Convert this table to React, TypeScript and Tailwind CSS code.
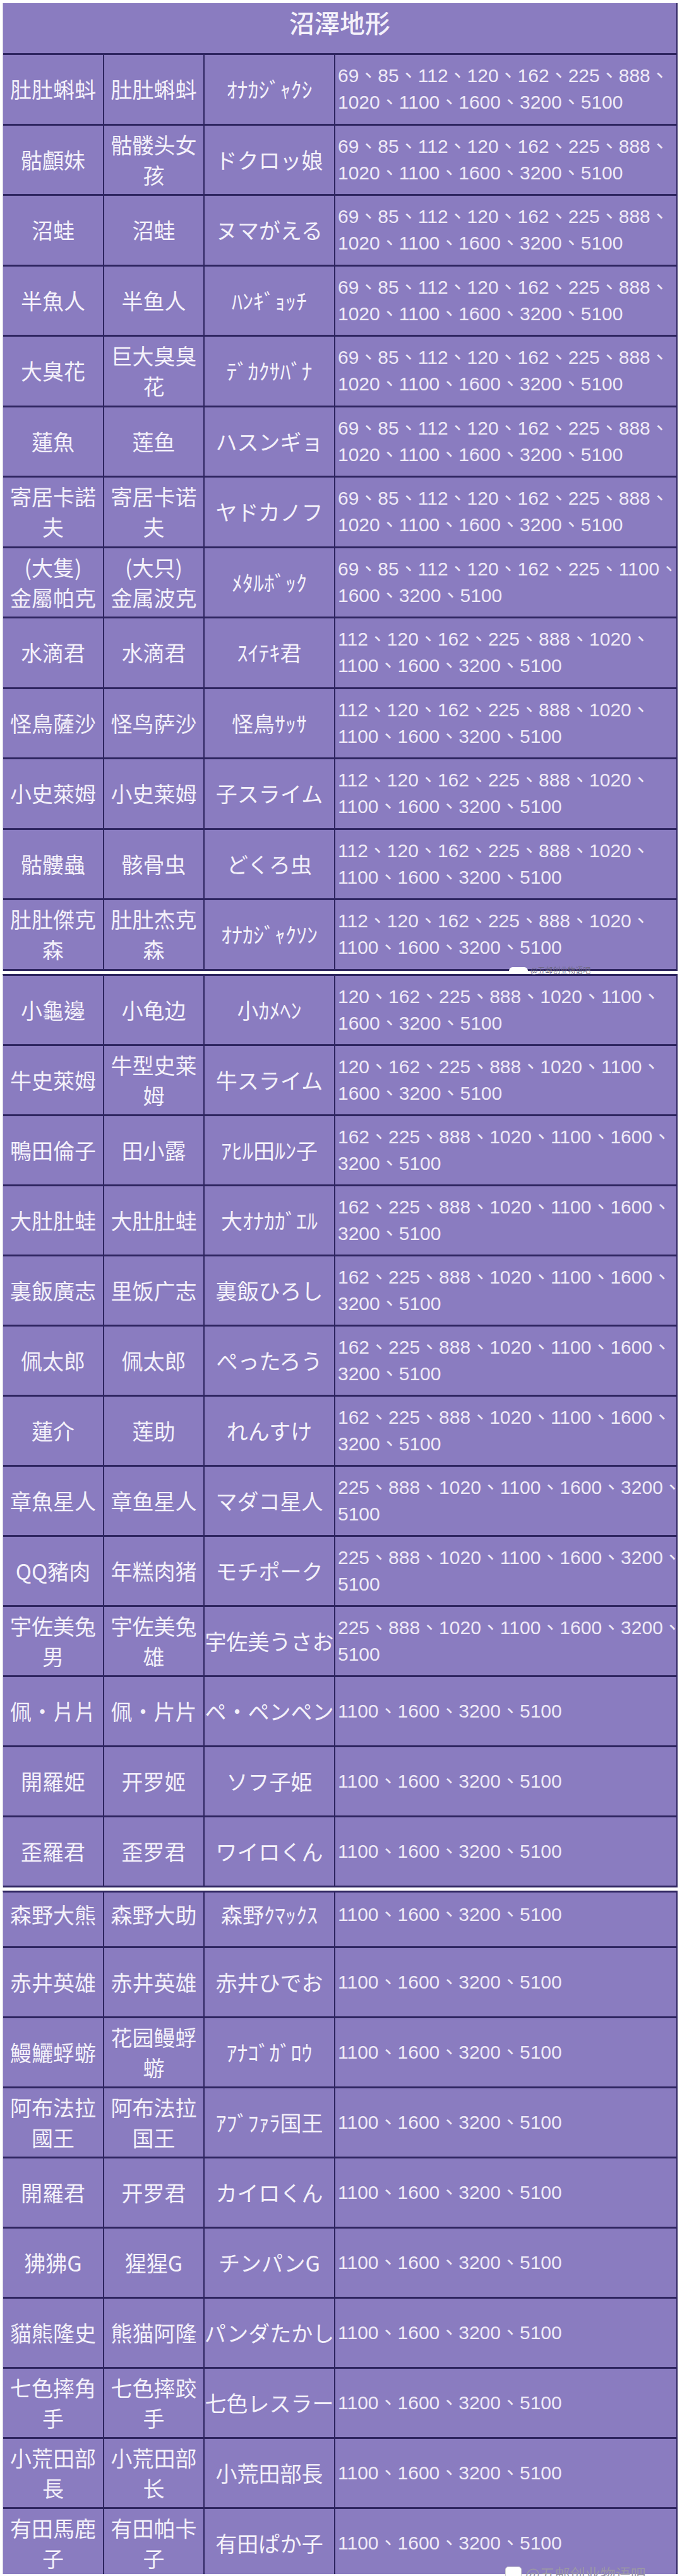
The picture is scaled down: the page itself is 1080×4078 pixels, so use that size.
import React from 'react';

type Row = { a: string; b: string; c: string; n: string[]; h: string; pad?: string };

const A = ['69、85、112、120、162、225、888、', '1020、1100、1600、3200、5100'];
const B = ['69、85、112、120、162、225、1100、', '1600、3200、5100'];
const C = ['112、120、162、225、888、1020、', '1100、1600、3200、5100'];
const D = ['120、162、225、888、1020、1100、', '1600、3200、5100'];
const E = ['162、225、888、1020、1100、1600、', '3200、5100'];
const F = ['225、888、1020、1100、1600、3200、', '5100'];
const G = ['1100、1600、3200、5100'];

const H1 = 'h-[111.5px]';
const H2 = 'h-[111px]';

// 第一段
const SECTION_1: Row[] = [
  { a: '肚肚蝌蚪', b: '肚肚蝌蚪', c: 'ｵﾅｶｼﾞｬｸｼ', n: A, h: H1 },
  { a: '骷顱妹', b: '骷髅头女\n孩', c: 'ドクロッ娘', n: A, h: H1 },
  { a: '沼蛙', b: '沼蛙', c: 'ヌマがえる', n: A, h: H1 },
  { a: '半魚人', b: '半鱼人', c: 'ﾊﾝｷﾞｮｯﾁ', n: A, h: H1 },
  { a: '大臭花', b: '巨大臭臭\n花', c: 'ﾃﾞｶｸｻﾊﾞﾅ', n: A, h: H1 },
  { a: '蓮魚', b: '莲鱼', c: 'ハスンギョ', n: A, h: H1 },
  { a: '寄居卡諾\n夫', b: '寄居卡诺\n夫', c: 'ヤドカノフ', n: A, h: H1 },
  { a: '(大隻)\n金屬帕克', b: '(大只)\n金属波克', c: 'ﾒﾀﾙﾎﾞｯｸ', n: B, h: H1 },
  { a: '水滴君', b: '水滴君', c: 'ｽｲﾃｷ君', n: C, h: H1 },
  { a: '怪鳥薩沙', b: '怪鸟萨沙', c: '怪鳥ｻｯｻ', n: C, h: H1 },
  { a: '小史萊姆', b: '小史莱姆', c: '子スライム', n: C, h: H1 },
  { a: '骷髏蟲', b: '骸骨虫', c: 'どくろ虫', n: C, h: H1 },
  { a: '肚肚傑克\n森', b: '肚肚杰克\n森', c: 'ｵﾅｶｼﾞｬｸｿﾝ', n: C, h: H1 },
];

const SECTION_2: Row[] = [
  { a: '小龜邊', b: '小龟边', c: '小ｶﾒﾍﾝ', n: D, h: H2 },
  { a: '牛史萊姆', b: '牛型史莱\n姆', c: '牛スライム', n: D, h: H2 },
  { a: '鴨田倫子', b: '田小露', c: 'ｱﾋﾙ田ﾙﾝ子', n: E, h: H2 },
  { a: '大肚肚蛙', b: '大肚肚蛙', c: '大ｵﾅｶｶﾞｴﾙ', n: E, h: H2 },
  { a: '裏飯廣志', b: '里饭广志', c: '裏飯ひろし', n: E, h: H2 },
  { a: '佩太郎', b: '佩太郎', c: 'ぺったろう', n: E, h: H2 },
  { a: '蓮介', b: '莲助', c: 'れんすけ', n: E, h: H2 },
  { a: '章魚星人', b: '章鱼星人', c: 'マダコ星人', n: F, h: H2 },
  { a: 'QQ豬肉', b: '年糕肉猪', c: 'モチポーク', n: F, h: H2 },
  { a: '宇佐美兔\n男', b: '宇佐美兔\n雄', c: '宇佐美うさお', n: F, h: H2 },
  { a: '佩・片片', b: '佩·片片', c: 'ペ・ペンペン', n: G, h: H2 },
  { a: '開羅姫', b: '开罗姬', c: 'ソフ子姫', n: G, h: H2 },
  { a: '歪羅君', b: '歪罗君', c: 'ワイロくん', n: G, h: H2 },
];

const SECTION_3: Row[] = [
  { a: '森野大熊', b: '森野大助', c: '森野ｸﾏｯｸｽ', n: G, h: 'h-[88px]', pad: 'pb-[16px]' },
  { a: '赤井英雄', b: '赤井英雄', c: '赤井ひでお', n: G, h: H2 },
  { a: '鰻鱺蜉蝣', b: '花园鳗蜉\n蝣', c: 'ｱﾅｺﾞｶﾞﾛｳ', n: G, h: H2 },
  { a: '阿布法拉\n國王', b: '阿布法拉\n国王', c: 'ｱﾌﾞﾌｧﾗ国王', n: G, h: H2 },
  { a: '開羅君', b: '开罗君', c: 'カイロくん', n: G, h: H2 },
  { a: '狒狒G', b: '猩猩G', c: 'チンパンG', n: G, h: H2 },
  { a: '貓熊隆史', b: '熊猫阿隆', c: 'パンダたかし', n: G, h: H2 },
  { a: '七色摔角\n手', b: '七色摔跤\n手', c: '七色レスラー', n: G, h: H2 },
  { a: '小荒田部\n長', b: '小荒田部\n长', c: '小荒田部長', n: G, h: H2 },
  { a: '有田馬鹿\n子', b: '有田帕卡\n子', c: '有田ぱか子', n: G, h: H2 },
];

const cell =
  'flex items-center justify-center text-center whitespace-pre border-r-2 border-[#2e2560] text-[34px] leading-[48px] text-[#f4f1fa]';

function TableRow({ r }: { r: Row }) {
  return (
    <div className={`grid grid-cols-[160px_159px_207px_1fr] border-b-[3px] border-[#2e2560] bg-[#8a7cc0] ${r.h}`}>
      <div className={`${cell} ${r.pad ?? ''} font-['Noto_Sans_CJK_TC',sans-serif]`}>{r.a}</div>
      <div className={`${cell} ${r.pad ?? ''} font-['Noto_Sans_CJK_SC',sans-serif]`}>{r.b}</div>
      <div className={`${cell} ${r.pad ?? ''} font-['Noto_Sans_CJK_JP',sans-serif]`}>{r.c}</div>
      <div
        className={`flex flex-col justify-center items-start pl-[4px] text-[30px] leading-[42px] text-[#efeaf7] font-['Liberation_Sans','Noto_Sans_CJK_TC',sans-serif] ${r.pad ?? ''}`}
      >
        {r.n.map((line, i) => (
          <span key={i} className="whitespace-nowrap">
            {line}
          </span>
        ))}
      </div>
    </div>
  );
}

export default function App() {
  return (
    <div className="relative w-[1080px] h-[4078px] bg-white overflow-hidden">
      <div className="h-[5px]" />

      {/* 沼澤地形 */}
      <div className="ml-[4px] w-[1069px] border-l border-[#c9c4dc] border-r-2 border-r-[#2e2560]">
        <div className="h-[82px] bg-[#8a7cc0] border-b-[3px] border-[#2e2560] pt-[6px] text-center text-[40px] leading-[48px] font-medium text-[#f4f1fa] font-['Noto_Sans_CJK_TC',sans-serif]">
          沼澤地形
        </div>
        {SECTION_1.map((r, i) => (
          <TableRow key={i} r={r} />
        ))}
      </div>

      <div className="relative h-[5.5px]">
        <div className="absolute left-[806px] top-[-7px] flex items-center gap-[4px]">
          <span className="w-[30px] h-[9px] rounded-t-[6px] bg-white" />
          <span className="text-[12px] leading-[12px] text-[#6b6680] font-['Noto_Sans_CJK_SC',sans-serif]">@五邮创业物语吧</span>
        </div>
      </div>

      <div className="ml-[4px] w-[1069px] border-l border-[#c9c4dc] border-r-2 border-r-[#2e2560] border-t-[3px] border-t-[#2e2560]">
        {SECTION_2.map((r, i) => (
          <TableRow key={i} r={r} />
        ))}
      </div>

      <div className="h-[5px]" />

      <div className="ml-[4px] w-[1069px] h-[1082px] overflow-hidden border-l border-[#c9c4dc] border-r-2 border-r-[#2e2560] border-t-[3px] border-t-[#2e2560]">
        {SECTION_3.map((r, i) => (
          <TableRow key={i} r={r} />
        ))}
      </div>

      <div className="absolute left-[800px] top-[4060px] flex items-center gap-[6px]">
        <span className="w-[26px] h-[22px] rounded-[5px] bg-white border border-[#d0d0d0]" />
        <span className="text-[24px] leading-[28px] text-[#9a97a6] font-['Noto_Sans_CJK_SC',sans-serif]">@五邮创业物语吧</span>
      </div>
    </div>
  );
}
